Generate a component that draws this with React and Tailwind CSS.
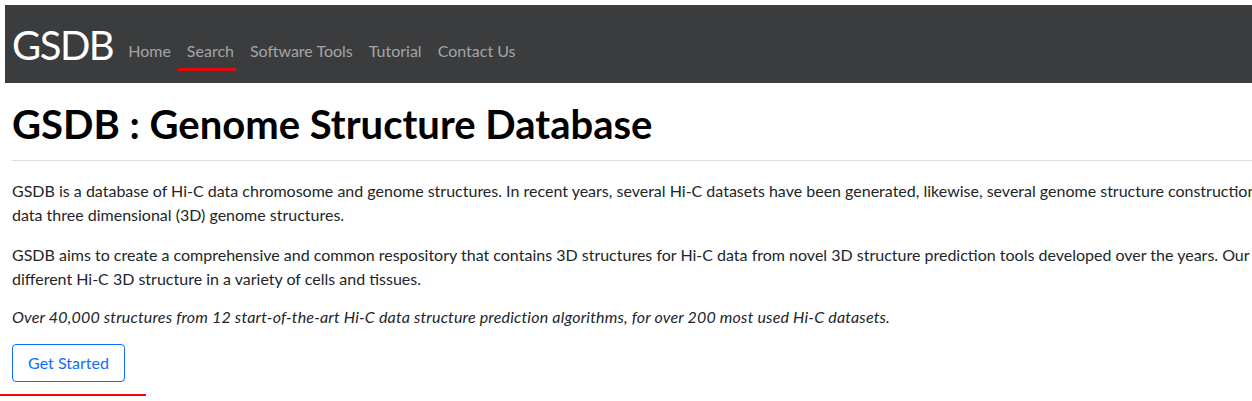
export default function App() {
  return (
    <div className="w-full overflow-hidden bg-white h-[401px] font-['Lato',sans-serif]">
      <div className="w-[1400px]">
        <nav className="ml-[5px] mt-[5px] h-[78px] bg-[#3b3c3e] flex items-center pl-[7px]">
          <span className="text-white text-[40px] tracking-[-1.5px] leading-none mr-[15px] relative top-[1px]">GSDB</span>
          <div className="flex items-center gap-[16px] text-[16px] text-[#a3a5a8] mt-[14px]">
            <span>Home</span>
            <span className="relative">
              Search
              <span className="absolute left-[-9px] right-[-2px] top-[29px] h-[3px] bg-[#e00b0b]"></span>
            </span>
            <span>Software Tools</span>
            <span>Tutorial</span>
            <span>Contact Us</span>
          </div>
        </nav>
        <div className="px-[12px] pt-[17px]">
          <h1 className="text-[40px] font-bold leading-[1.2] text-black">GSDB : Genome Structure Database</h1>
          <hr className="mt-[12px] border-0 border-t border-[#dcdcdc] w-[1240px]" />
          <div className="text-[16px] leading-[24px] text-[#212529] whitespace-nowrap">
            <p className="mt-[18px]">
              <span className="block">GSDB is a database of Hi-C data chromosome and genome structures. In recent years, several Hi-C datasets have been generated, likewise, several genome structure construction methods have been developed to model from Hi-C</span>
              <span className="block">data three dimensional (3D) genome structures.</span>
            </p>
            <p className="mt-[16px]">
              <span className="block">GSDB aims to create a comprehensive and common respository that contains 3D structures for Hi-C data from novel 3D structure prediction tools developed over the years. Our database contains</span>
              <span className="block">different Hi-C 3D structure in a variety of cells and tissues.</span>
            </p>
            <p className="mt-[14px] italic tracking-[0.18px]">Over 40,000 structures from 12 start-of-the-art Hi-C data structure prediction algorithms, for over 200 most used Hi-C datasets.</p>
          </div>
          <button className="mt-[15px] h-[38px] w-[113px] border border-[#0d6efd] rounded-[4px] text-[#0d6efd] text-[16px]">Get Started</button>
        </div>
        <div className="mt-[12px] w-[146px] h-[2px] bg-[#ff0000]"></div>
      </div>
    </div>
  );
}
